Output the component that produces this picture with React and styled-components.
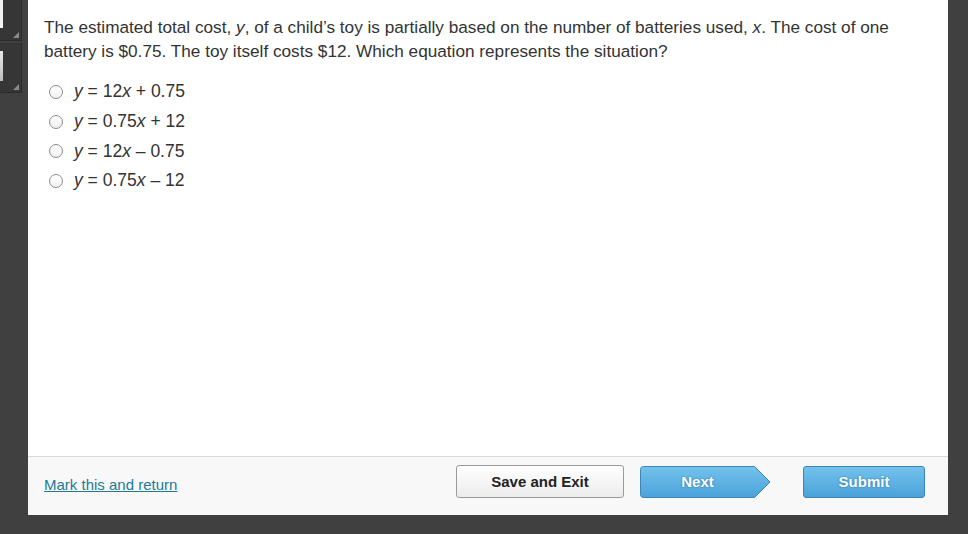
import React, { useState } from 'react';
import styled, { createGlobalStyle } from 'styled-components';

const GlobalStyle = createGlobalStyle`
    html, body {
        margin: 0;
        padding: 0;
        background: #404040;
        font-family: "Liberation Sans", Arial, sans-serif;
    }
`;

const options = [
    { a: '12', b: '+ 0.75' },
    { a: '0.75', b: '+ 12' },
    { a: '12', b: '\u2013 0.75' },
    { a: '0.75', b: '\u2013 12' },
];

const App = () => {
    const [ picked, setPicked ] = useState(null);
    return (
        <>
            <GlobalStyle />
            <Page>
                <SideStrip>
                    <Tab height={41}>
                        <Thumb top={0} height={28} light />
                    </Tab>
                    <Tab height={50}>
                        <Thumb top={8} height={30} />
                    </Tab>
                </SideStrip>
                <Panel>
                    <Content>
                        <Question>
                            The estimated total cost, <i>y</i>, of a child&rsquo;s toy is partially based on the number of batteries used, <i>x</i>. The cost of one battery is $0.75. The toy itself costs $12. Which equation represents the situation?
                        </Question>
                        <Options>
                            {options.map((o, i) => (
                                <Option key={i} onClick={() => setPicked(i)}>
                                    <Radio checked={picked === i} />
                                    <span><i>y</i> = {o.a}<i>x</i> {o.b}</span>
                                </Option>
                            ))}
                        </Options>
                    </Content>
                    <Footer>
                        <MarkLink href="#">Mark this and return</MarkLink>
                        <Buttons>
                            <SaveButton>Save and Exit</SaveButton>
                            <NextButton>
                                <svg width="131" height="32" viewBox="0 0 131 32">
                                    <defs>
                                        <linearGradient id="nextGrad" x1="0" y1="0" x2="0" y2="1">
                                            <stop offset="0" stopColor="#74c2ec" />
                                            <stop offset="1" stopColor="#4aa2da" />
                                        </linearGradient>
                                    </defs>
                                    <path d="M3.5 0.5 H114.5 L130 16 L114.5 31.5 H3.5 Q0.5 31.5 0.5 28.5 V3.5 Q0.5 0.5 3.5 0.5 Z" fill="url(#nextGrad)" stroke="#3a86bb" />
                                </svg>
                                <span>Next</span>
                            </NextButton>
                            <SubmitButton>Submit</SubmitButton>
                        </Buttons>
                    </Footer>
                </Panel>
            </Page>
        </>
    );
};

const Page = styled.div`
    display: flex;
    width: 968px;
    height: 534px;
    overflow: hidden;
`;

const SideStrip = styled.div`
    width: 28px;
    display: flex;
    flex-direction: column;
    gap: 2px;
`;

const Tab = styled.div`
    position: relative;
    width: 22px;
    height: ${p => p.height}px;
    background: #363636;
    border-right: 1px solid #2a2a2a;
    border-bottom: 1px solid #2a2a2a;
    box-sizing: border-box;
    &::after {
        content: '';
        position: absolute;
        right: 2px;
        bottom: 2px;
        border-style: solid;
        border-width: 0 0 6px 6px;
        border-color: transparent transparent #8a8a8a transparent;
    }
`;

const Thumb = styled.div`
    position: absolute;
    left: 0;
    top: ${p => p.top}px;
    width: 3px;
    height: ${p => p.height}px;
    background: ${p => p.light ? '#f2f2f2' : 'linear-gradient(#e8e8e8, #bdbdbd)'};
`;

const Panel = styled.div`
    width: 920px;
    height: 515px;
    background: #fff;
    display: flex;
    flex-direction: column;
`;

const Content = styled.div`
    flex: 1;
    padding: 15px 16px 0 16px;
    color: #333;
`;

const Question = styled.p`
    margin: 0;
    font-size: 17.2px;
    line-height: 24px;
    padding-right: 10px;
`;

const Options = styled.div`
    margin-top: 14px;
    display: flex;
    flex-direction: column;
`;

const Option = styled.label`
    display: flex;
    align-items: center;
    height: 29.7px;
    font-size: 17.5px;
    cursor: pointer;
    i { font-style: italic; }
`;

const Radio = styled.span`
    width: 12px;
    height: 12px;
    margin: 0 11px 0 5px;
    border-radius: 50%;
    border: 1px solid #8c8c8c;
    background: ${p => p.checked ? 'radial-gradient(circle, #333 0 3px, #fff 4px)' : 'linear-gradient(#fff, #f0f0f0)'};
    flex-shrink: 0;
`;

const Footer = styled.div`
    height: 59px;
    border-top: 1px solid #d8d8d8;
    background: #f8f8f8;
    display: flex;
    align-items: flex-start;
    justify-content: space-between;
    padding: 8px 23px 0 16px;
    box-sizing: border-box;
`;

const MarkLink = styled.a`
    font-size: 15px;
    color: #1f7a96;
    text-decoration: underline;
    margin-top: 11px;
`;

const Buttons = styled.div`
    display: flex;
    align-items: center;
    gap: 16px;
`;

const SaveButton = styled.button`
    width: 168px;
    height: 33px;
    border: 1px solid #9a9a9a;
    border-radius: 3px;
    background: linear-gradient(#ffffff, #ececec);
    font-family: "Liberation Sans", Arial, sans-serif;
    font-weight: bold;
    font-size: 15px;
    color: #222;
    cursor: pointer;
`;

const NextButton = styled.button`
    position: relative;
    width: 131px;
    height: 32px;
    padding: 0 16px 0 0;
    border: none;
    background: none;
    margin-right: 16px;
    cursor: pointer;
    svg {
        position: absolute;
        left: 0;
        top: 0;
    }
    span {
        position: relative;
        font-family: "Liberation Sans", Arial, sans-serif;
        font-weight: bold;
        font-size: 15px;
        color: #fff;
        text-shadow: 0 0 2px #2d6f9a;
    }
`;

const SubmitButton = styled.button`
    width: 122px;
    height: 32px;
    border: 1px solid #3a86bb;
    border-radius: 3px;
    background: linear-gradient(#74c2ec, #4aa2da);
    font-family: "Liberation Sans", Arial, sans-serif;
    font-weight: bold;
    font-size: 15px;
    color: #fff;
    text-shadow: 0 0 2px #2d6f9a;
    cursor: pointer;
`;

export default App;
